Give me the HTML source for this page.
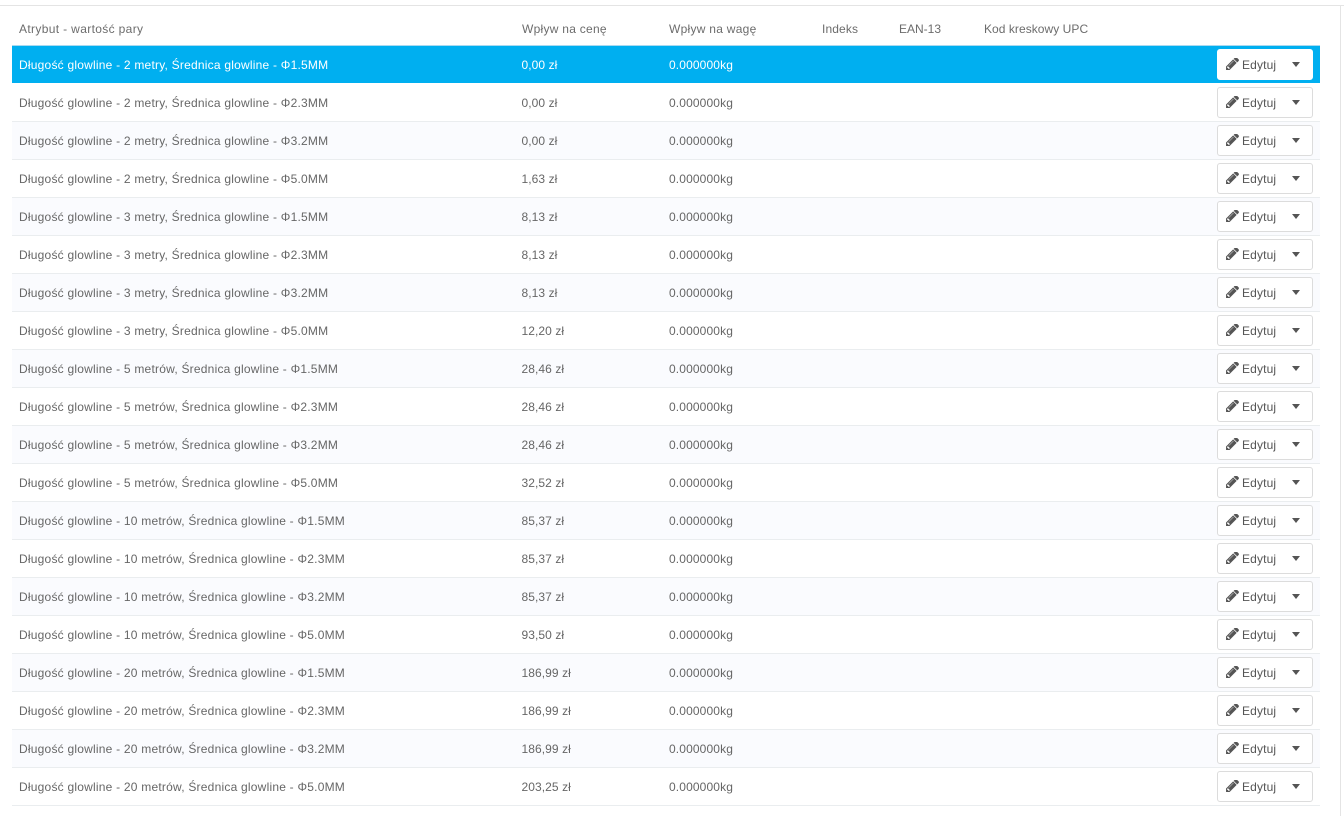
<!DOCTYPE html>
<html lang="pl"><head><meta charset="utf-8"><title>Kombinacje</title>
<style>
html,body{margin:0;padding:0;width:1344px;height:816px;overflow:hidden;background:#fff}
body{position:relative;font-family:"Liberation Sans",sans-serif;font-size:12px;color:#666}
.top{position:absolute;left:0;top:5px;width:1344px;height:1px;background:#e4e4e4}
.right{position:absolute;left:1340px;top:5px;width:1px;height:811px;background:#e4e4e4}
.hl{position:absolute;left:12px;top:45px;width:1308px;height:1px;background:#a9d9f0}
.h{position:absolute;top:21px;line-height:16px;white-space:nowrap;color:#6c6c6c}
.r{position:absolute;left:12px;width:1308px;height:37px;border-bottom:1px solid #eaedef;background:#fff}
.t{background:#fafbfe}
.s{background:#00aff0;color:#fff;border-bottom:0;height:37px}
.r span{position:absolute;top:11px;line-height:16px;white-space:nowrap}
.r .a{left:7px;letter-spacing:.22px}
.r .p{left:509.5px;letter-spacing:.08px}
.r .w{left:657px;letter-spacing:.13px}
.b{position:absolute;left:1205px;top:3px;width:94px;height:29px;border:1px solid #dcdcdc;border-radius:3px;background:#fff;color:#555}
.s .b{border-color:#fff}
.b svg{position:absolute;left:8px;top:8px;width:13px;height:12px;fill:#555}
.b em{position:absolute;left:24px;top:7px;font-style:normal;line-height:16px;letter-spacing:.15px;color:#555}
.b i{position:absolute;left:74px;top:12px;width:0;height:0;border-left:4.5px solid transparent;border-right:4.5px solid transparent;border-top:5px solid #555}
</style></head><body>
<svg width="0" height="0" style="position:absolute"><symbol id="pen" viewBox="0 128 1515 1408"><path d="M363 1408l91-91-235-235-91 91v107h128v128h107z M886 480q0-22-22-22-10 0-17 7l-542 542q-7 7-7 17 0 22 22 22 10 0 17-7l542-542q7-7 7-17z M832 288l416 416-832 832H0v-416z M1515 384q0 53-37 90l-166 166-416-416 165-166q36-38 90-38 53 0 91 38l235 234q37 39 37 92z"/></symbol></svg>
<div class="top"></div><div class="right"></div><div class="hl"></div>
<div class="h" style="left:19px;letter-spacing:.35px">Atrybut - wartość pary</div>
<div class="h" style="left:522px;letter-spacing:.27px">Wpływ na cenę</div>
<div class="h" style="left:669px;letter-spacing:.27px">Wpływ na wagę</div>
<div class="h" style="left:822px;letter-spacing:.12px">Indeks</div>
<div class="h" style="left:899px;letter-spacing:0">EAN-13</div>
<div class="h" style="left:984px;letter-spacing:.05px">Kod kreskowy UPC</div>

<div class="r s" style="top:46px"><span class="a">Długość glowline - 2 metry, Średnica glowline - Φ1.5MM</span><span class="p">0,00 zł</span><span class="w">0.000000kg</span><div class="b"><svg><use href="#pen"/></svg><em>Edytuj</em><i></i></div></div>
<div class="r" style="top:84px"><span class="a">Długość glowline - 2 metry, Średnica glowline - Φ2.3MM</span><span class="p">0,00 zł</span><span class="w">0.000000kg</span><div class="b"><svg><use href="#pen"/></svg><em>Edytuj</em><i></i></div></div>
<div class="r t" style="top:122px"><span class="a">Długość glowline - 2 metry, Średnica glowline - Φ3.2MM</span><span class="p">0,00 zł</span><span class="w">0.000000kg</span><div class="b"><svg><use href="#pen"/></svg><em>Edytuj</em><i></i></div></div>
<div class="r" style="top:160px"><span class="a">Długość glowline - 2 metry, Średnica glowline - Φ5.0MM</span><span class="p">1,63 zł</span><span class="w">0.000000kg</span><div class="b"><svg><use href="#pen"/></svg><em>Edytuj</em><i></i></div></div>
<div class="r t" style="top:198px"><span class="a">Długość glowline - 3 metry, Średnica glowline - Φ1.5MM</span><span class="p">8,13 zł</span><span class="w">0.000000kg</span><div class="b"><svg><use href="#pen"/></svg><em>Edytuj</em><i></i></div></div>
<div class="r" style="top:236px"><span class="a">Długość glowline - 3 metry, Średnica glowline - Φ2.3MM</span><span class="p">8,13 zł</span><span class="w">0.000000kg</span><div class="b"><svg><use href="#pen"/></svg><em>Edytuj</em><i></i></div></div>
<div class="r t" style="top:274px"><span class="a">Długość glowline - 3 metry, Średnica glowline - Φ3.2MM</span><span class="p">8,13 zł</span><span class="w">0.000000kg</span><div class="b"><svg><use href="#pen"/></svg><em>Edytuj</em><i></i></div></div>
<div class="r" style="top:312px"><span class="a">Długość glowline - 3 metry, Średnica glowline - Φ5.0MM</span><span class="p">12,20 zł</span><span class="w">0.000000kg</span><div class="b"><svg><use href="#pen"/></svg><em>Edytuj</em><i></i></div></div>
<div class="r t" style="top:350px"><span class="a">Długość glowline - 5 metrów, Średnica glowline - Φ1.5MM</span><span class="p">28,46 zł</span><span class="w">0.000000kg</span><div class="b"><svg><use href="#pen"/></svg><em>Edytuj</em><i></i></div></div>
<div class="r" style="top:388px"><span class="a">Długość glowline - 5 metrów, Średnica glowline - Φ2.3MM</span><span class="p">28,46 zł</span><span class="w">0.000000kg</span><div class="b"><svg><use href="#pen"/></svg><em>Edytuj</em><i></i></div></div>
<div class="r t" style="top:426px"><span class="a">Długość glowline - 5 metrów, Średnica glowline - Φ3.2MM</span><span class="p">28,46 zł</span><span class="w">0.000000kg</span><div class="b"><svg><use href="#pen"/></svg><em>Edytuj</em><i></i></div></div>
<div class="r" style="top:464px"><span class="a">Długość glowline - 5 metrów, Średnica glowline - Φ5.0MM</span><span class="p">32,52 zł</span><span class="w">0.000000kg</span><div class="b"><svg><use href="#pen"/></svg><em>Edytuj</em><i></i></div></div>
<div class="r t" style="top:502px"><span class="a">Długość glowline - 10 metrów, Średnica glowline - Φ1.5MM</span><span class="p">85,37 zł</span><span class="w">0.000000kg</span><div class="b"><svg><use href="#pen"/></svg><em>Edytuj</em><i></i></div></div>
<div class="r" style="top:540px"><span class="a">Długość glowline - 10 metrów, Średnica glowline - Φ2.3MM</span><span class="p">85,37 zł</span><span class="w">0.000000kg</span><div class="b"><svg><use href="#pen"/></svg><em>Edytuj</em><i></i></div></div>
<div class="r t" style="top:578px"><span class="a">Długość glowline - 10 metrów, Średnica glowline - Φ3.2MM</span><span class="p">85,37 zł</span><span class="w">0.000000kg</span><div class="b"><svg><use href="#pen"/></svg><em>Edytuj</em><i></i></div></div>
<div class="r" style="top:616px"><span class="a">Długość glowline - 10 metrów, Średnica glowline - Φ5.0MM</span><span class="p">93,50 zł</span><span class="w">0.000000kg</span><div class="b"><svg><use href="#pen"/></svg><em>Edytuj</em><i></i></div></div>
<div class="r t" style="top:654px"><span class="a">Długość glowline - 20 metrów, Średnica glowline - Φ1.5MM</span><span class="p">186,99 zł</span><span class="w">0.000000kg</span><div class="b"><svg><use href="#pen"/></svg><em>Edytuj</em><i></i></div></div>
<div class="r" style="top:692px"><span class="a">Długość glowline - 20 metrów, Średnica glowline - Φ2.3MM</span><span class="p">186,99 zł</span><span class="w">0.000000kg</span><div class="b"><svg><use href="#pen"/></svg><em>Edytuj</em><i></i></div></div>
<div class="r t" style="top:730px"><span class="a">Długość glowline - 20 metrów, Średnica glowline - Φ3.2MM</span><span class="p">186,99 zł</span><span class="w">0.000000kg</span><div class="b"><svg><use href="#pen"/></svg><em>Edytuj</em><i></i></div></div>
<div class="r" style="top:768px"><span class="a">Długość glowline - 20 metrów, Średnica glowline - Φ5.0MM</span><span class="p">203,25 zł</span><span class="w">0.000000kg</span><div class="b"><svg><use href="#pen"/></svg><em>Edytuj</em><i></i></div></div>
</body></html>
